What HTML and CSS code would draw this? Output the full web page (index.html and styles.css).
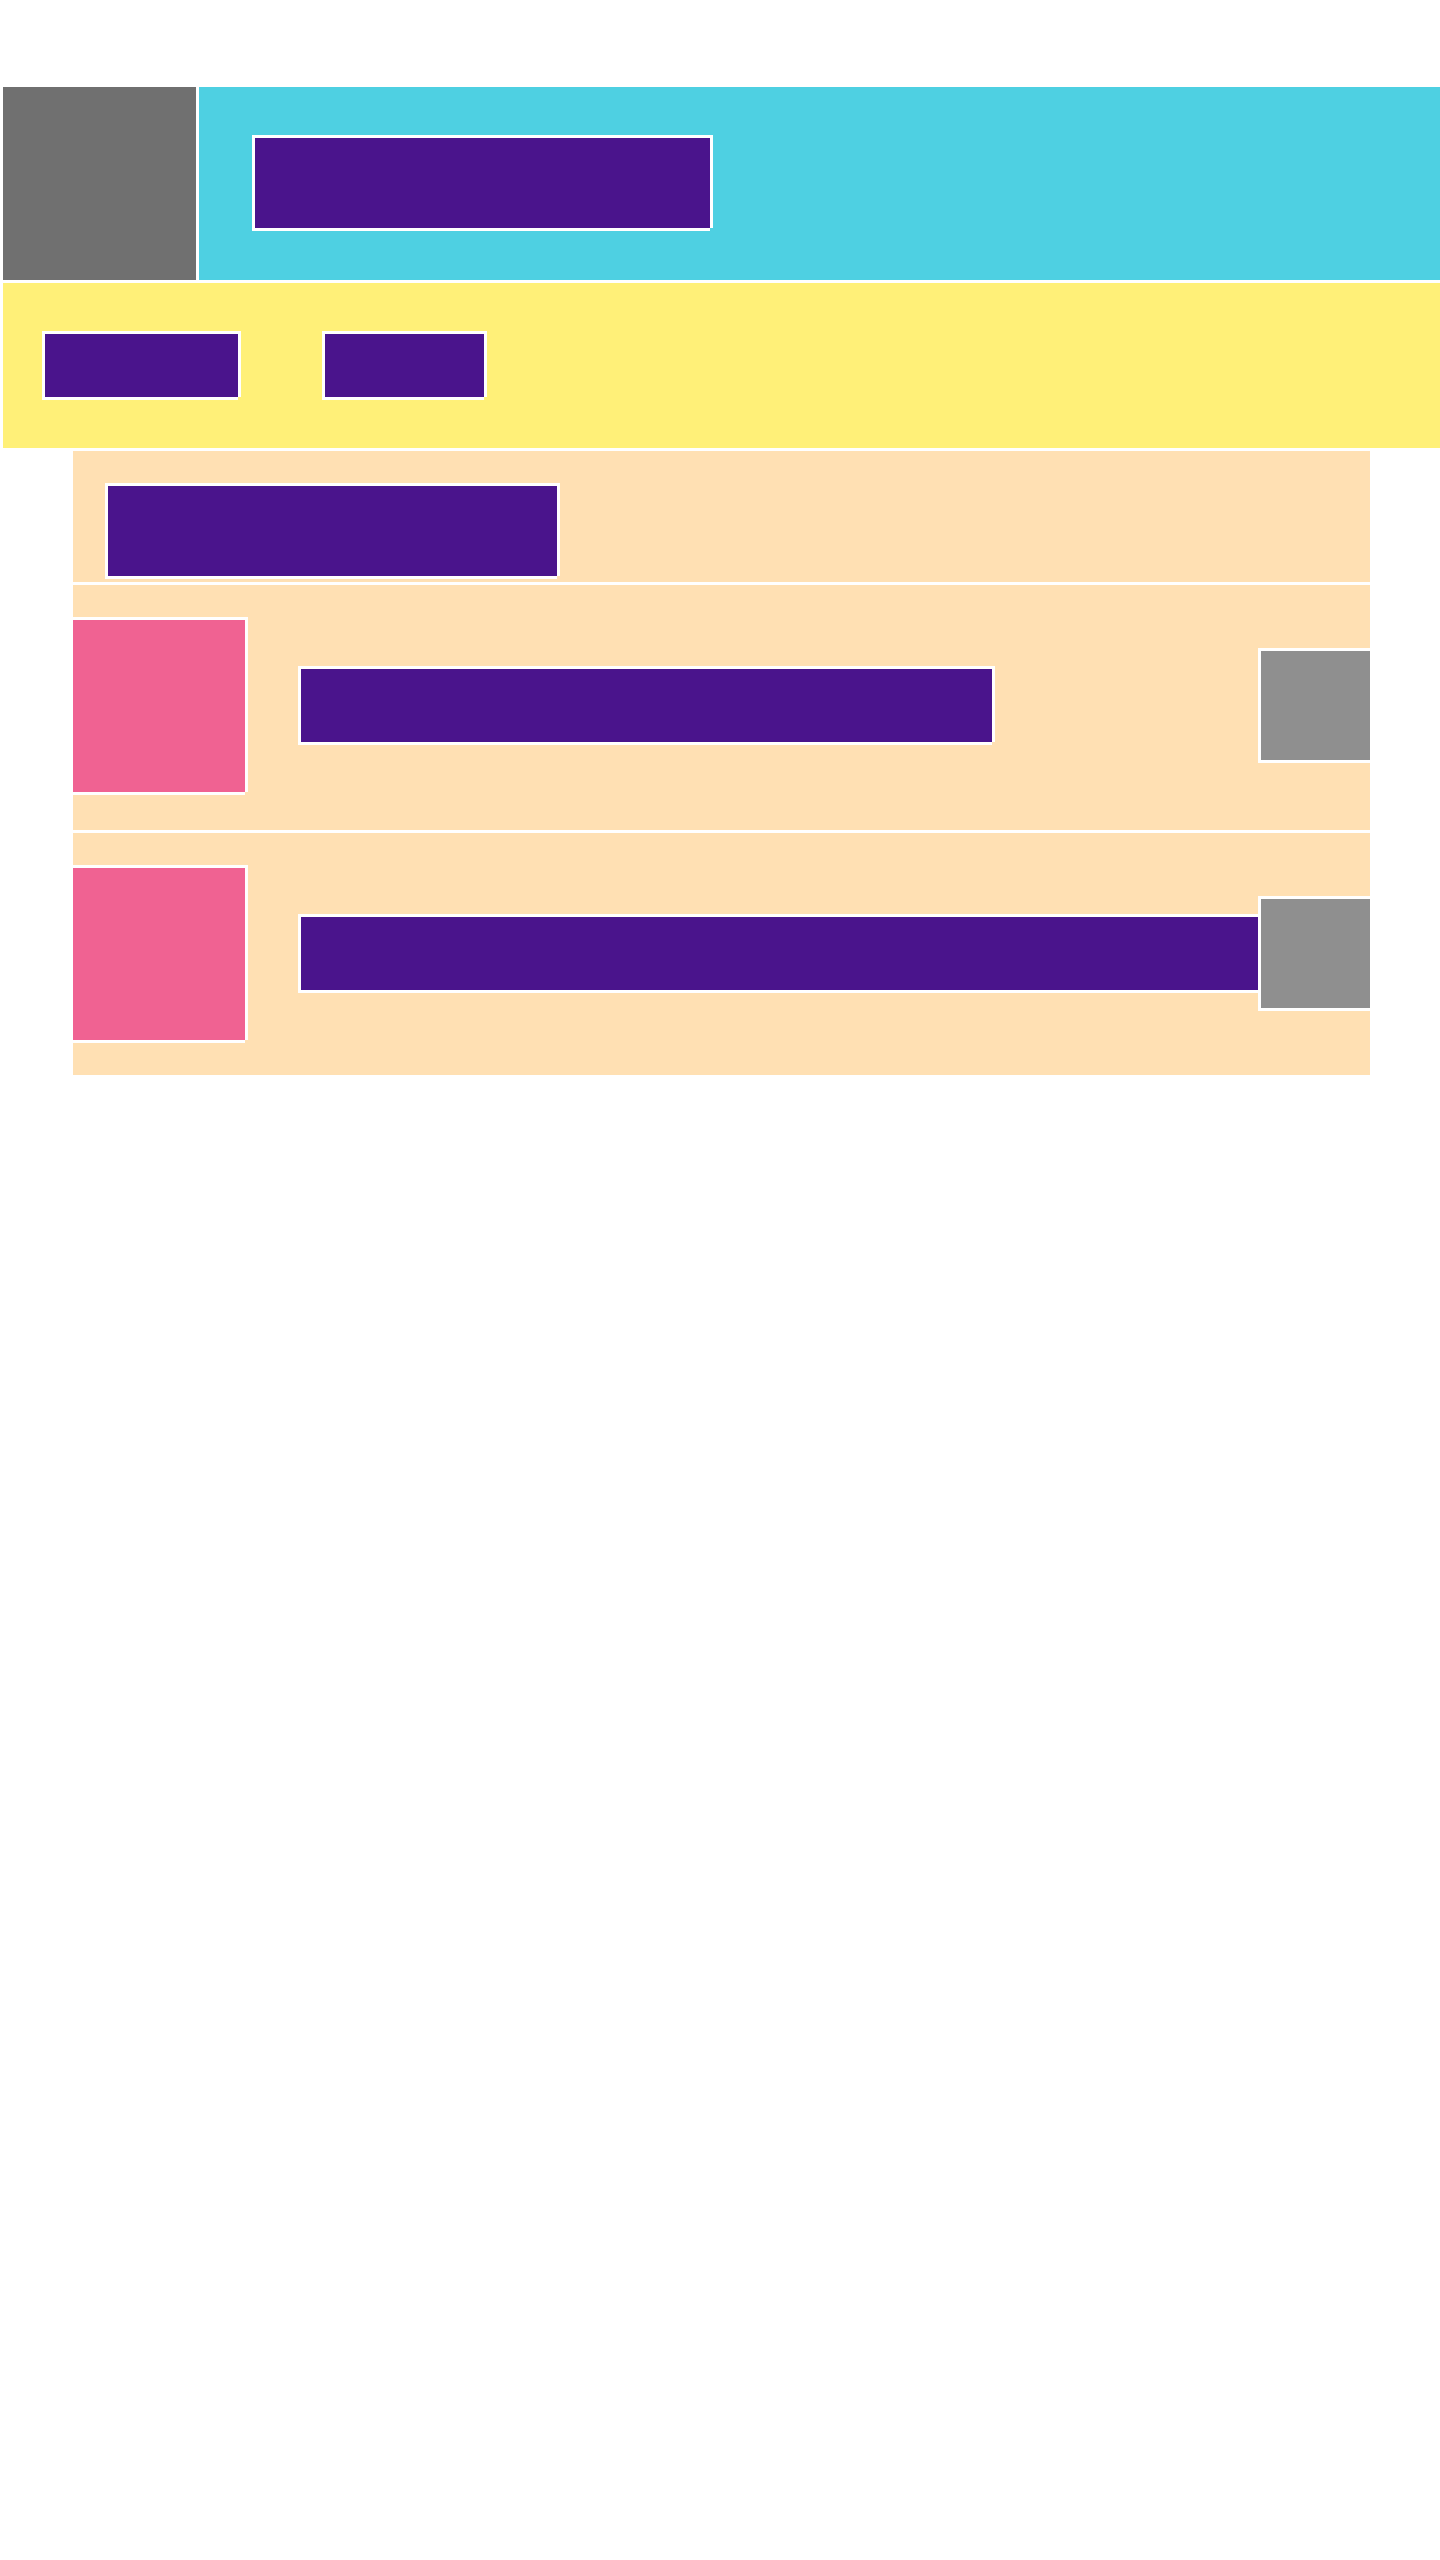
FILE: index.html
```html
<!DOCTYPE html>
<html lang="en">
<head>
    <meta charset="UTF-8">
    <title>layout</title>
    <link rel="stylesheet" href="styles.css">
</head>
<body>
    <div class="page">
        <div class="header">
            <div class="logo"></div>
            <div class="banner">
                <div class="label label-title"></div>
            </div>
        </div>
        <div class="nav">
            <div class="label nav-one"></div>
            <div class="label nav-two"></div>
        </div>
        <div class="list">
            <div class="list-head">
                <div class="label list-title"></div>
            </div>
            <div class="row row-first">
                <div class="thumb"></div>
                <div class="label row-text"></div>
                <div class="tag"></div>
            </div>
            <div class="row">
                <div class="thumb"></div>
                <div class="label row-text row-text-wide"></div>
                <div class="tag"></div>
            </div>
        </div>
    </div>
</body>
</html>
```

FILE: styles.css
```css
* {
    margin: 0;
    padding: 0;
}
body{
    background: #fff;
    font-family: "Liberation Sans", Arial, sans-serif;
}
.page{
    padding: 87px 0 0 3px;
}
.label{
    background: #4a148c;
    border-left: 3px solid #fff;
    border-top: 3px solid #fff;
    box-shadow: 3px 0 0 #fff, 0 3px 0 #fff;
}

/* header */
.header{
    display: flex;
    gap: 3px;
    height: 193px;
}
.logo{
    width: 193px;
    background: #707070;
}
.banner{
    flex: 1;
    background: #4ed0e2;
    padding: 48px 0 0 53px;
}
.label-title{
    width: 455px;
    height: 90px;
}

/* nav */
.nav{
    display: flex;
    align-items: flex-start;
    gap: 84px;
    height: 117px;
    margin-top: 3px;
    padding: 48px 0 0 39px;
    background: #fff078;
}
.nav-one{
    width: 193px;
    height: 63px;
}
.nav-two{
    width: 159px;
    height: 63px;
}

/* list */
.list{
    width: 1297px;
    margin-left: 70px;
}
.list-head{
    margin-top: 3px;
    padding: 32px 32px 6px;
    background: #ffe0b3;
}
.list-title{
    width: 449px;
    height: 90px;
}
.row{
    display: flex;
    align-items: center;
    margin-top: 3px;
    padding: 32px 0 35px;
    background: #ffe0b3;
    overflow: hidden;
}
.row-first{
    padding-bottom: 38px;
}
.thumb{
    width: 172px;
    height: 172px;
    background: #f06292;
    border-top: 3px solid #fff;
    box-shadow: 3px 0 0 #fff, 0 3px 0 #fff;
}
.row-text{
    width: 691px;
    height: 73px;
    margin-left: 53px;
    margin-bottom: 2px;
}
.row-text-wide{
    flex: 1;
}
.tag{
    width: 109px;
    height: 109px;
    margin-left: auto;
    margin-bottom: 2px;
    background: #8f8f8f;
    border-left: 3px solid #fff;
    border-top: 3px solid #fff;
    box-shadow: 3px 0 0 #fff, 0 3px 0 #fff;
}
```
